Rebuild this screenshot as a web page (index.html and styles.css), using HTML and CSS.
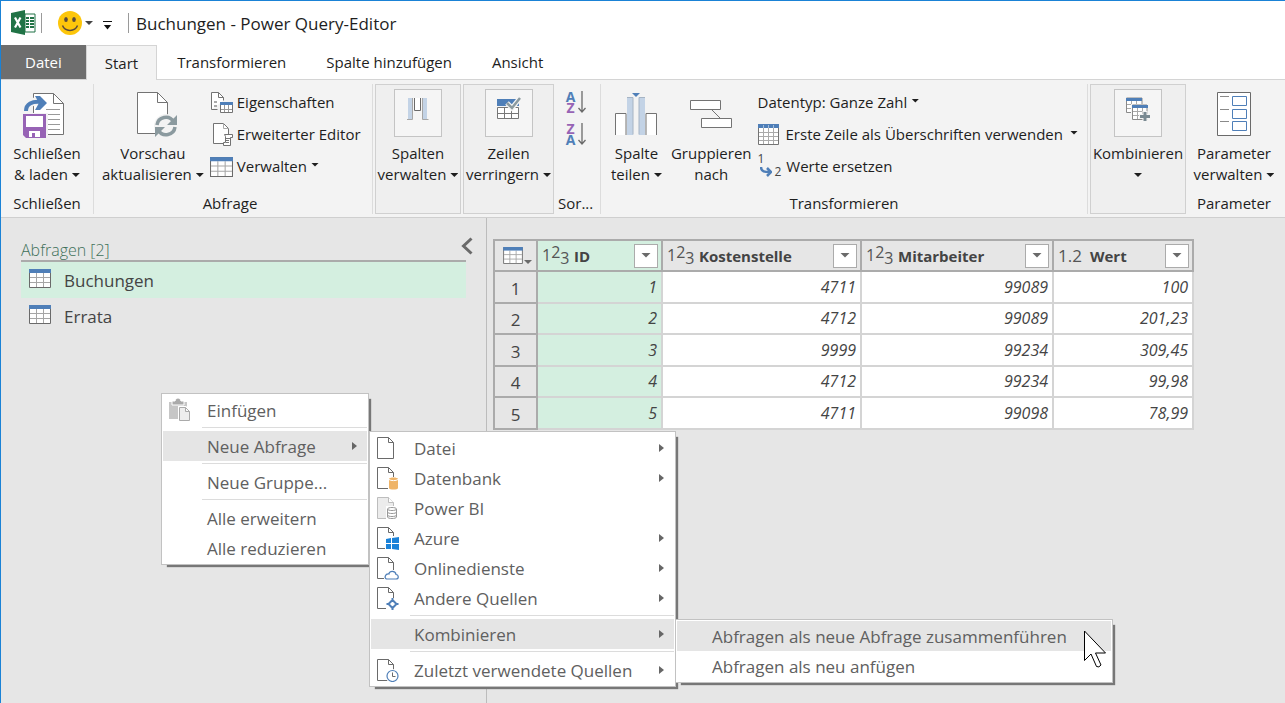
FILE: index.html
```html
<!DOCTYPE html>
<html lang="de">
<head>
<meta charset="utf-8">
<meta name="viewport" content="width=device-width, initial-scale=1">
<title>Buchungen - Power Query-Editor</title>
<link rel="stylesheet" href="styles.css">
</head>
<body>
<svg class="defs" aria-hidden="true">
  <symbol id="table" viewBox="0 0 22 19">
    <path d="M.5.5h21v18H.5z" fill="#fff" stroke="#6a6a6a"/>
    <path d="M7.500 4v14M14.500 4v14M1 8.500h20M1 13.500h20" stroke="#a6a6a6" fill="none"/>
    <path d="M0 0h22v4H0z" fill="#4f7fb8"/>
  </symbol>
  <symbol id="page" viewBox="0 0 23 24">
    <path d="M1.500 1.500h11l5 5v16h-16z" fill="#fff" stroke="#6a6a6a"/>
    <path d="M12.500 1.500v5h5" fill="none" stroke="#6a6a6a"/>
  </symbol>
</svg>

<header class="titlebar">
  <svg class="excel" width="25" height="25" viewBox="0 0 25 25" aria-hidden="true">
    <path d="M14 4h10v18H14z" fill="#fff" stroke="#217346" stroke-width="1"/>
    <path d="M15 7h3v2h-3zM19 7h4v2h-4zM15 10h3v2h-3zM19 10h4v2h-4zM15 13h3v2h-3zM19 13h4v2h-4zM15 16h3v2h-3zM19 16h4v2h-4z" fill="#217346"/>
    <path d="M0 3 14 0v25L0 22z" fill="#217346"/>
    <path d="m4 7.500 5.500 10M9.500 7.500 4 17.500" stroke="#fff" stroke-width="2.200"/>
  </svg>
  <span class="rule"></span>
  <button class="tool smile" aria-label="Feedback senden">
    <svg width="24" height="24" viewBox="0 0 24 24"><circle cx="12" cy="12" r="12" fill="#fdc60b"/><ellipse cx="8" cy="8.500" rx="1.800" ry="2.500" fill="#5a4a3c"/><ellipse cx="16" cy="8.500" rx="1.800" ry="2.500" fill="#5a4a3c"/><path d="M4.500 14.500c2.500 6.500 12.500 6.500 15 0" fill="none" stroke="#5a4a3c" stroke-width="1.500"/></svg>
    <span class="caret"></span>
  </button>
  <button class="tool quick" aria-label="Schnellzugriff anpassen"><span class="bar"></span><span class="caret"></span></button>
  <span class="rule"></span>
  <h1 class="title">Buchungen - Power Query-Editor</h1>
</header>

<nav class="tabs">
  <button class="tab file">Datei</button>
  <button class="tab active">Start</button>
  <button class="tab">Transformieren</button>
  <button class="tab">Spalte hinzufügen</button>
  <button class="tab">Ansicht</button>
</nav>

<section class="ribbon" aria-label="Start">
  <div class="group close">
    <div class="group-body">
      <button class="big">
        <svg width="42" height="48" viewBox="0 0 42 48"><path d="M11.500 2.500h20l10 10v31h-30z" fill="#fff" stroke="#737373"/><path d="M31.500 2.500v10h10" fill="none" stroke="#737373"/><path d="M24 18.500h14M26 23.500h12M26 28.500h12M26 33.500h12M26 38.500h12" stroke="#999"/><path d="M5 20c0-9 8-11 15-9" fill="none" stroke="#f3f3f3" stroke-width="8"/><path d="M4 20c0-7 6-10 15-9" fill="none" stroke="#4f7fb8" stroke-width="4"/><path d="M13 5h5l7 7-7 7h-5l4-7z" fill="#4f7fb8"/><path d="M0 22h26v26H0z" fill="#f3f3f3"/><path d="M1 23h23v24H4l-3-3z" fill="#9763b5"/><path d="M4 25h17v11H4zM7 40h11v6H7z" fill="#fff"/><path d="M10 42h3v4h-3z" fill="#9763b5"/></svg>
        <span>Schließen</span><span>&amp; laden<i class="caret"></i></span>
      </button>
    </div>
    <h2>Schließen</h2>
  </div>

  <div class="group query">
    <div class="group-body">
      <button class="big">
        <svg width="44" height="48" viewBox="0 0 44 48"><path d="M6.500 1.500h20l10 10v31h-30z" fill="#fff" stroke="#737373"/><path d="M26.500 1.500v10h10" fill="none" stroke="#737373"/><circle cx="35" cy="35" r="12" fill="#f3f3f3"/><path d="M26 34c1-8 12-11 17-3M44 36c-1 8-12 11-17 3" fill="none" stroke="#8b9a9f" stroke-width="3.500"/><path d="M46 24v10H36zM24 46V36h10z" fill="#8b9a9f"/></svg>
        <span>Vorschau</span><span>aktualisieren<i class="caret"></i></span>
      </button>
      <div class="stack">
        <button class="small"><svg width="23" height="23" viewBox="0 0 23 23"><path d="M1.500 18.500v-17h7l5 5v3M1.500 18.500h6" fill="#fff" stroke="#737373"/><path d="M8.500 1.500v5h5" fill="none" stroke="#737373"/><path d="M4 10h3v2H4zM4 14h3v2H4z" fill="#aaa"/><path d="M10.500 12.500h12v9h-12z" fill="#fff" stroke="#737373"/><path d="M14.500 14v7M18.500 14v7M11 18.500h11" stroke="#999"/><path d="M10 11h13v3H10z" fill="#4f7fb8"/></svg>Eigenschaften</button>
        <button class="small"><svg width="23" height="23" viewBox="0 0 23 23"><path d="M13 20.500H3.500v-20h10l5 5V11" fill="#fff" stroke="#737373"/><path d="M13.500.5v5h5" fill="none" stroke="#aaa"/><path d="M14.500 11.500h8v3h-2v8h-7v-3h2v-6z" fill="#fff" stroke="#737373"/><path d="M16 15.500h4M16 17.500h3M16 19.500h3" stroke="#777"/></svg>Erweiterter Editor</button>
        <button class="small"><svg width="23" height="20"><use href="#table"/></svg>Verwalten<i class="caret"></i></button>
      </div>
    </div>
    <h2>Abfrage</h2>
  </div>

  <div class="group framed columns">
    <button class="big">
      <span class="tile"><svg width="22" height="24" viewBox="0 0 22 24"><path d="M1 1h4v21H1zM16 1h4v21h-4z" fill="#c3d3e6"/><path d="M5.500 1v21.500H0M15.500 1v21.500H21.500" fill="none" stroke="#a6a6a6"/><path d="M7.500 1v12.500h6V1" fill="#fff" stroke="#6a6a6a"/></svg></span>
      <span>Spalten</span><span>verwalten<i class="caret"></i></span>
    </button>
  </div>
  <div class="group framed rows">
    <button class="big">
      <span class="tile"><svg width="24" height="24" viewBox="0 0 24 24"><path d="M0 2h22v7H0z" fill="#4f7fb8"/><path d="M.5 10.500h21v11H.5zM7.500 10v12M14.500 10v12M0 16.500h22" fill="#fff" stroke="#777"/><path d="m10 6 5 5 8-10" fill="none" stroke="#f5f5f5" stroke-width="5"/><path d="m10 6 5 5 8-10" fill="none" stroke="#8b9a9f" stroke-width="2.500"/></svg></span>
      <span>Zeilen</span><span>verringern<i class="caret"></i></span>
    </button>
  </div>

  <div class="group sort">
    <div class="group-body sorts">
      <button class="sort-btn" aria-label="Aufsteigend sortieren"><span class="az"><b class="a">A</b><b class="z">Z</b></span><svg width="8" height="22" viewBox="0 0 8 22"><path d="M4 0v21M.5 17 4 21l3.500-4" fill="none" stroke="#6a6a6a" stroke-width="1.300"/></svg></button>
      <button class="sort-btn" aria-label="Absteigend sortieren"><span class="az"><b class="z">Z</b><b class="a">A</b></span><svg width="8" height="22" viewBox="0 0 8 22"><path d="M4 0v21M.5 17 4 21l3.500-4" fill="none" stroke="#6a6a6a" stroke-width="1.300"/></svg></button>
    </div>
    <h2>Sor...</h2>
  </div>

  <div class="group transform">
    <div class="group-body">
      <button class="big split">
        <svg width="42" height="48" viewBox="0 0 42 48"><path d="M.5 44V22.500H11V44M41.500 44V22.500H31V44" fill="#fff" stroke="#737373"/><path d="M12 7h18v37H12z" fill="#f3f3f3"/><path d="M12 7h6v37h-6zM24 7h6v37h-6z" fill="#c3d3e6"/><path d="M12 6.500h6v37M30 6.500h-6v37" fill="none" stroke="#a6b4c4"/><path d="M17 2h8l-4 4z" fill="#4f7fb8"/></svg>
        <span>Spalte</span><span>teilen<i class="caret"></i></span>
      </button>
      <button class="big groupby">
        <svg width="42" height="48" viewBox="0 0 42 48"><path d="M.5 9.500h30v9H.500zM11.500 27.500h30v9h-30zM22 19l8 8" fill="#fff" stroke="#737373"/></svg>
        <span>Gruppieren</span><span>nach</span>
      </button>
      <div class="stack">
        <button class="small type">Datentyp: Ganze Zahl<i class="caret"></i></button>
        <button class="small wide"><svg width="21" height="21" viewBox="0 0 21 21"><path d="M.5.5h20v20H.500z" fill="#fff" stroke="#737373"/><path d="M5.500 4v16M10.500 4v16M15.500 4v16M1 8.500h19M1 12.500h19M1 16.500h19" stroke="#aaa"/><path d="M0 0h21v4H0z" fill="#4f7fb8"/><path d="M5.500 1v3M10.500 1v3M15.500 1v3" stroke="#a3bddb"/></svg>Erste Zeile als Überschriften verwenden<i class="caret"></i></button>
        <button class="small replace"><span class="from">1</span><svg width="12" height="10" viewBox="0 0 12 10" aria-hidden="true"><path d="M1 0c0 5 4 5 9 5M7 1l4 4-4 4" fill="none" stroke="#4f7fb8" stroke-width="2.500"/></svg><span class="to">2</span>Werte ersetzen</button>
      </div>
    </div>
    <h2>Transformieren</h2>
  </div>

  <div class="group framed combine">
    <button class="big">
      <span class="tile"><svg width="24" height="24" viewBox="0 0 24 24"><path d="M.5 1v14.500H16V1z" fill="#fff" stroke="#8a8a8a"/><path d="M5.500 4v11M10.500 4v11M1 7.500h14M1 11.500h14" stroke="#aaa"/><path d="M0 1h16v3H0z" fill="#4f7fb8"/><path d="M5 7h19v17H5z" fill="#f5f5f5"/><path d="M6.500 8v14.500H21V8z" fill="#fff" stroke="#8a8a8a"/><path d="M11.500 11v11M16.500 11v11M7 14.500h14M7 18.500h14" stroke="#aaa"/><path d="M6 8h16v3H6z" fill="#4f7fb8"/><path d="M19 14v11M13 19.500h11" stroke="#f5f5f5" stroke-width="5"/><path d="M19 15v9M14 19.500h10" stroke="#7a8a92" stroke-width="3"/></svg></span>
      <span>Kombinieren</span><span><i class="caret"></i></span>
    </button>
  </div>

  <div class="group params">
    <div class="group-body">
      <button class="big">
        <svg width="34" height="48" viewBox="0 0 34 48"><path d="M.5 1.500h33v43H.500z" fill="#fff" stroke="#6a6a6a"/><path d="M3 5.500h9M3 18.500h9M3 30.500h9" stroke="#8a8a8a"/><path d="M15.500 5.500h14v9h-14zM15.500 18.500h14v9h-14zM15.500 30.500h14v9h-14z" fill="#fff" stroke="#4f7fb8"/></svg>
        <span>Parameter</span><span>verwalten<i class="caret"></i></span>
      </button>
    </div>
    <h2>Parameter</h2>
  </div>
</section>

<main class="workspace">
  <aside class="queries">
    <div class="queries-head">
      <h2>Abfragen [2]</h2>
      <button class="collapse" aria-label="Bereich reduzieren"><svg width="12" height="18" viewBox="0 0 12 18"><path d="m10.500 1.500-8 7.500 8 7.500" fill="none" stroke="#6a6a6a" stroke-width="3"/></svg></button>
    </div>
    <button class="query-item selected"><svg width="22" height="19"><use href="#table"/></svg>Buchungen</button>
    <button class="query-item"><svg width="22" height="19"><use href="#table"/></svg>Errata</button>
  </aside>

  <section class="preview">
    <table class="grid">
      <colgroup><col class="c-num"><col class="c-id"><col class="c-cost"><col class="c-emp"><col class="c-val"></colgroup>
      <thead>
        <tr>
          <th><button class="corner" aria-label="Tabellenmenü"><svg width="20" height="17"><use href="#table"/></svg><span class="caret"></span></button></th>
          <th class="sel"><div class="head"><span class="kind"><span>1</span><span class="up">2</span><span class="down">3</span></span><span class="name">ID</span><button class="filter" aria-label="ID filtern"><span class="caret"></span></button></div></th>
          <th><div class="head"><span class="kind"><span>1</span><span class="up">2</span><span class="down">3</span></span><span class="name">Kostenstelle</span><button class="filter" aria-label="Kostenstelle filtern"><span class="caret"></span></button></div></th>
          <th><div class="head"><span class="kind"><span>1</span><span class="up">2</span><span class="down">3</span></span><span class="name">Mitarbeiter</span><button class="filter" aria-label="Mitarbeiter filtern"><span class="caret"></span></button></div></th>
          <th><div class="head"><span class="kind decimal">1.2</span><span class="name">Wert</span><button class="filter" aria-label="Wert filtern"><span class="caret"></span></button></div></th>
        </tr>
      </thead>
      <tbody>
        <tr><th>1</th><td class="sel">1</td><td>4711</td><td>99089</td><td>100</td></tr>
        <tr><th>2</th><td class="sel">2</td><td>4712</td><td>99089</td><td>201,23</td></tr>
        <tr><th>3</th><td class="sel">3</td><td>9999</td><td>99234</td><td>309,45</td></tr>
        <tr><th>4</th><td class="sel">4</td><td>4712</td><td>99234</td><td>99,98</td></tr>
        <tr><th>5</th><td class="sel">5</td><td>4711</td><td>99098</td><td>78,99</td></tr>
      </tbody>
    </table>
  </section>
</main>

<ul class="menu context">
  <li><button><svg width="24" height="24" viewBox="0 0 24 24"><path d="M1 4h18v17H1z" fill="#c6c6c6"/><path d="M4 3h3c1-4 5-4 6 0h3v4H4z" fill="#aaa" stroke="#fff"/><path d="M11.500 9.500h6l5 5v8h-11z" fill="#eee" stroke="#fff" stroke-width="3"/><path d="M11.500 9.500h6l4 4v9h-10zM17.500 9.500v4h4" fill="#eee" stroke="#aaa"/></svg>Einfügen</button></li>
  <li class="sep"></li>
  <li class="open"><button><span class="blank"></span>Neue Abfrage<i class="arrow"></i></button>
    <ul class="menu sources">
      <li><button><svg width="23" height="24"><use href="#page"/></svg>Datei<i class="arrow"></i></button></li>
      <li><button><svg width="23" height="24"><use href="#page"/><path d="M12 11h11v13H12z" fill="#fff"/><path d="M13 13c0-2 9-2 9 0v9c0 2-9 2-9 0z" fill="#efb468"/><path d="M13 13.500c2 1.500 7 1.500 9 0" fill="none" stroke="#fff"/></svg>Datenbank<i class="arrow"></i></button></li>
      <li><button><svg width="23" height="24" viewBox="0 0 23 24"><path d="M1.500 1.500h11l5 5v16h-16z" fill="#ececec" stroke="#bdbdbd"/><path d="M12.500 1.500v5h5" fill="#fff" stroke="#bdbdbd"/><path d="M10 10h12v14H10z" fill="#fff"/><path d="M11.500 13c0-2 9-2 9 0v8c0 2-9 2-9 0zM11.500 13c0 2 9 2 9 0M11.500 16c0 2 9 2 9 0M11.500 19c0 2 9 2 9 0" fill="none" stroke="#999"/></svg>Power BI</button></li>
      <li><button><svg width="23" height="24"><use href="#page"/><path d="M9 10h14v14H9z" fill="#fff"/><path d="m10 13 5-1v5h-5zM16 12l7-1v6h-7zM10 18h5v5h-5zM16 18h7v6l-7-1z" fill="#1b82d8"/></svg>Azure<i class="arrow"></i></button></li>
      <li><button><svg width="23" height="24"><use href="#page"/><path d="M8 14h15v10H8z" fill="#fff"/><path d="M10.500 23h9.500c3 0 3-4 0-4.500-.5-4-7-4-7-.500-4-.5-5 4-2.500 5z" fill="#fff" stroke="#4f7fb8" stroke-width="1.200"/></svg>Onlinedienste<i class="arrow"></i></button></li>
      <li><button><svg width="23" height="24"><use href="#page"/><path d="M10 12h13v12H10z" fill="#fff"/><path d="m16.500 14 4 4-4 4-4-4zM16.500 12v2M16.500 22v2M10.500 18h2M20.500 18h2" fill="none" stroke="#4f7fb8" stroke-width="2"/></svg>Andere Quellen<i class="arrow"></i></button></li>
      <li class="sep"></li>
      <li class="open"><button><span class="blank"></span>Kombinieren<i class="arrow"></i></button>
        <ul class="menu merge">
          <li class="open"><button>Abfragen als neue Abfrage zusammenführen</button></li>
          <li><button>Abfragen als neu anfügen</button></li>
        </ul>
      </li>
      <li class="sep"></li>
      <li><button><svg width="23" height="24"><use href="#page"/><circle cx="16.500" cy="18" r="7" fill="#fff"/><circle cx="16.500" cy="18" r="5.500" fill="#fff" stroke="#4f7fb8" stroke-width="1.200"/><path d="M16.500 14.500V18.500h3" fill="none" stroke="#6a6a6a"/></svg>Zuletzt verwendete Quellen<i class="arrow"></i></button></li>
    </ul>
  </li>
  <li class="sep"></li>
  <li><button><span class="blank"></span>Neue Gruppe...</button></li>
  <li class="sep"></li>
  <li><button><span class="blank"></span>Alle erweitern</button></li>
  <li><button><span class="blank"></span>Alle reduzieren</button></li>
</ul>

<svg class="pointer" width="24" height="38" viewBox="0 0 24 38" aria-hidden="true"><path d="M1.500 1v29.500l6.500-6.500 5.500 12.500q2.500 1.500 4.500-1.500l-5.500-12h10z" fill="#fff" stroke="#000" stroke-width="1"/></svg>
</body>
</html>
```

FILE: styles.css
```css
* { box-sizing: border-box; }

body {
  margin: 0;
  min-height: 100vh;
  display: flex;
  flex-direction: column;
  position: relative;
  background: #e6e6e6;
  border-top: 1px solid #1a82d6;
  border-left: 1px solid #1a82d6;
  font-family: "Open Sans", "Noto Sans", sans-serif;
  font-size: 15px;
  line-height: 21px;
  color: #1e1e1e;
}

button {
  border: 0;
  padding: 0;
  margin: 0;
  background: none;
  font: inherit;
  color: inherit;
}

h1, h2 { margin: 0; font-weight: 400; font-size: inherit; }
ul { list-style: none; margin: 0; padding: 0; }
svg { display: block; flex: none; }
.defs { display: none; }

.caret {
  display: inline-block;
  flex: none;
  width: 8px;
  height: 4px;
  background: currentColor;
  clip-path: polygon(0 0, 100% 0, 50% 100%);
}

/* Title bar */
.titlebar {
  display: flex;
  align-items: center;
  height: 44px;
  padding-left: 10px;
  background: #fff;
}
.rule { width: 1px; height: 20px; background: #9a9a9a; }
.excel { margin-bottom: 2px; }
.excel + .rule { margin-left: 5px; }
.tool { display: flex; align-items: center; }
.smile { margin-left: 16px; gap: 3px; color: #444; }
.quick { flex-direction: column; gap: 3px; margin: 4px 16px 0 10px; color: #111; }
.quick .bar { width: 9px; height: 1px; background: #111; }
.quick .caret { height: 5px; }
.title { margin: 2px 0 0 7px; font-size: 17px; line-height: 24px; }

/* Tabs */
.tabs { display: flex; height: 34px; background: #fff; }
.tab { padding: 0 20px; }
.tab.file { padding: 0 24px; background: #6e6e6e; color: #fff; }
.tab.active {
  padding: 0 18px;
  background: #f3f3f3;
  border: 1px solid #d4d4d4;
  border-bottom: 0;
  margin-bottom: -1px;
  z-index: 1;
}

/* Ribbon */
.ribbon {
  display: flex;
  height: 139px;
  padding: 4px 0 3px;
  background: #f3f3f3;
  border-top: 1px solid #d4d4d4;
  border-bottom: 1px solid #cfcfcf;
}
.group {
  display: flex;
  flex-direction: column;
  justify-content: space-between;
  flex: none;
  border-right: 1px solid #dcdcdc;
}
.group h2 { text-align: center; }
.group-body { display: flex; padding-top: 7px; }
.big {
  display: flex;
  flex-direction: column;
  align-items: center;
  white-space: nowrap;
}
.big > svg { margin-bottom: 4px; overflow: visible; }
.close .big > svg { margin-right: 7px; }
.big span { min-height: 21px; }
.big .caret { margin-left: 4px; vertical-align: 3px; }
.stack { display: flex; flex-direction: column; gap: 11px; padding-top: 1px; }
.small {
  display: flex;
  align-items: center;
  gap: 4px;
  height: 21px;
  white-space: nowrap;
}
.small .caret { margin-bottom: 4px; }
.small.wide { gap: 7px; }
.replace { gap: 0; }
.replace .from, .replace .to { font-size: 12px; line-height: 12px; color: #444; }
.replace .from { align-self: flex-start; margin-top: -3px; }
.replace svg { margin: 10px 1px 0 -4px; }
.replace .to { margin: 10px 5px 0 1px; }

.close { width: 93px; }
.close .group-body { justify-content: center; }
.query { width: 279px; }
.query .group-body { padding-left: 8px; gap: 6px; }
.query h2 { padding-right: 6px; }
.framed {
  justify-content: flex-start;
  align-items: center;
  padding-top: 4px;
  background: #efefef;
  border: 1px solid #d0d0d0;
}
.tile {
  display: flex;
  align-items: flex-start;
  justify-content: center;
  width: 48px;
  height: 48px;
  margin-bottom: 6px;
  padding-top: 7px;
  background: #f5f5f5;
  border: 1px solid #c4c4c4;
}
.columns { width: 86px; margin-left: 2px; }
.rows { width: 91px; margin-left: 2px; }
.sort { width: 47px; }
.sort h2 { text-align: left; padding-left: 4px; }
.group-body.sorts { flex-direction: column; align-items: center; gap: 10px; padding-right: 2px; }
.sort-btn { display: flex; gap: 3px; height: 22px; }
.az { display: flex; flex-direction: column; align-items: center; font-size: 14px; line-height: 11px; }
.az .a { color: #4f7fb8; }
.az .z { color: #9763b5; }
.transform { width: 487px; }
.transform .group-body { padding-left: 10px; }
.split { margin-right: 9px; }
.groupby { margin-right: 6px; }
.combine { width: 96px; margin-left: 2px; }
.combine .caret { margin-left: 0; }
.params { width: 96px; border-right: 0; }
.params .group-body { justify-content: center; }

/* Workspace */
.workspace { flex: 1; display: flex; }
.queries {
  flex: none;
  width: 486px;
  padding: 19px 20px 0;
  border-right: 1px solid #bcbcbc;
  color: #444;
}
.queries-head {
  display: flex;
  justify-content: space-between;
  border-bottom: 2px solid #ababab;
  height: 25px;
}
.queries-head h2 { color: #3e7059; font-size: 16px; line-height: 27px; font-weight: 300; }
.collapse { align-self: flex-start; margin-right: -7px; }
.query-item {
  display: flex;
  align-items: center;
  gap: 13px;
  width: 100%;
  height: 36px;
  padding: 0 8px;
  font-size: 17px;
}
.query-item svg { margin-bottom: 3px; }
.query-item.selected { background: #d4efe0; }

.preview { flex: 1; padding: 21px 0 0 6px; min-width: 0; }
.grid {
  table-layout: fixed;
  width: 701px;
  border-spacing: 0;
  border-top: 2px solid #ababab;
  border-left: 2px solid #ababab;
  color: #444;
}
.c-num { width: 43px; }
.c-id { width: 125px; }
.c-cost { width: 199px; }
.c-emp { width: 192px; }
.c-val { width: 140px; }
.grid th, .grid td {
  padding: 0;
  height: 32px;
  border-right: 2px solid #d4d4d4;
  border-bottom: 2px solid #d4d4d4;
}
.grid tbody tr:nth-child(even) > * { height: 31px; }
.grid th { background: #e6e6e6; border-color: #ababab; }
.grid thead th { height: 31px; }
.grid tbody th { font-weight: 400; font-size: 17px; padding-top: 2px; }
.grid td { background: #fff; font-size: 16px; font-style: italic; text-align: right; padding-right: 4px; }
.grid .sel { background: #d4efe0; }
.head { display: flex; align-items: center; padding: 0 3px 0 4px; }
.kind { display: flex; align-items: center; width: 32px; font-size: 16px; line-height: 17px; font-weight: 400; color: #555; }
.kind .up { margin-bottom: 6px; }
.kind .down { margin-top: 6px; }
.kind.decimal { font-size: 17px; }
.name { flex: 1; text-align: left; font-size: 15px; font-weight: 700; padding-top: 1px; }
.filter {
  width: 24px;
  height: 24px;
  line-height: 16px;
  background: #fff;
  border: 1px solid #ababab;
  color: #6a6a6a;
}
.filter .caret { width: 10px; height: 5px; vertical-align: 4px; }
.corner { display: flex; align-items: flex-end; gap: 1px; margin: 0 auto 0 8px; color: #6a6a6a; }

/* Menus */
.menu {
  position: absolute;
  padding: 1px;
  background: #fff;
  border: 1px solid #c2c2c2;
  box-shadow: 4px 4px 1px -2px #777;
  font-size: 17px;
  color: #606060;
}
.menu li { position: relative; }
.menu button {
  display: flex;
  align-items: center;
  gap: 15px;
  width: 100%;
  height: 30px;
  padding: 0 10px 0 5px;
  white-space: nowrap;
  text-align: left;
}
.menu .blank { width: 23px; }
.context > li > button > .blank { width: 24px; }
.menu .sep { height: 6px; padding: 2px 0 0 39px; }
.menu .sep::before { content: ""; display: block; height: 1px; background: #dcdcdc; }
.menu .open > button { background: #e5e5e5; }
.arrow {
  margin-left: auto;
  width: 5px;
  height: 8px;
  background: #666;
  clip-path: polygon(0 0, 100% 50%, 0 100%);
}
.context { left: 160px; top: 392px; width: 208px; }
.sources { left: calc(100% + 2px); top: 0; width: 307px; }
.merge { left: calc(100% + 1px); top: 0; width: 438px; }
.menu .merge button { padding-left: 35px; }

.pointer { position: absolute; left: 1082px; top: 629px; }
```
